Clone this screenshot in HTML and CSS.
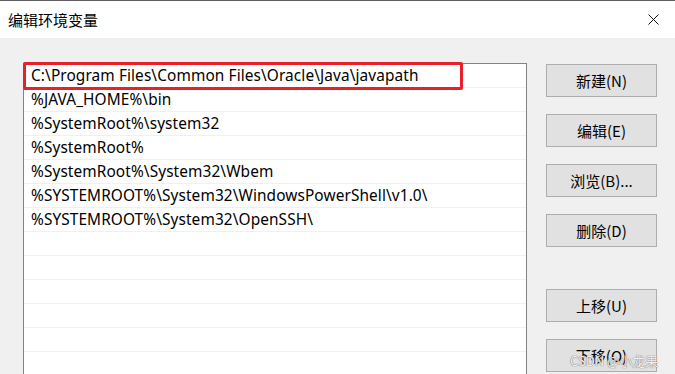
FILE: index.html
```html
<!DOCTYPE html>
<html lang="zh-CN">
<head>
    <meta charset="UTF-8">
    <meta name="viewport" content="width=device-width, initial-scale=1.0">
    <title>编辑环境变量</title>
    <link rel="stylesheet" href="styles.css">
</head>
<body>
    <div class="window">
        <!-- Title bar -->
        <div class="titlebar">
            <span class="title">编辑环境变量</span>
            <svg class="close" width="11" height="11" viewBox="0 0 11 11">
                <path d="M0.5 0.5 L10.5 10.5 M10.5 0.5 L0.5 10.5" stroke="#111" stroke-width="1" fill="none"/>
            </svg>
        </div>

        <div class="content">
            <div class="list">
                <div class="highlight"></div>
                <ul>
                    <li>C:\Program Files\Common Files\Oracle\Java\javapath</li>
                    <li>%JAVA_HOME%\bin</li>
                    <li>%SystemRoot%\system32</li>
                    <li>%SystemRoot%</li>
                    <li>%SystemRoot%\System32\Wbem</li>
                    <li>%SYSTEMROOT%\System32\WindowsPowerShell\v1.0\</li>
                    <li>%SYSTEMROOT%\System32\OpenSSH\</li>
                    <li></li>
                    <li></li>
                    <li></li>
                    <li></li>
                    <li></li>
                    <li></li>
                    <li></li>
                </ul>
            </div>

            <div class="buttons">
                <button>新建(N)</button>
                <button>编辑(E)</button>
                <button>浏览(B)...</button>
                <button>删除(D)</button>
                <button class="gap">上移(U)</button>
                <button>下移(O)</button>
            </div>
        </div>

        <div class="watermark">CSDN @小龙果</div>
    </div>
</body>
</html>
```

FILE: styles.css
```css
/* Windows dialog look */
body {
    margin: 0;
    padding: 0;
    font-family: 'Noto Sans', 'Noto Sans CJK SC', sans-serif;
    font-size: 15px;
    color: #000;
    overflow: hidden;
}

.window {
    width: 675px;
    height: 374px;
    border-top: 1px solid #5f5f5f;
    background: #f0f0f0;
    position: relative;
    overflow: hidden;
    box-sizing: border-box;
}

.titlebar {
    height: 37px;
    background: #fff;
    display: flex;
    align-items: center;
    justify-content: space-between;
    padding: 0 16px 0 8px;
}

.title {
    font-family: 'Noto Sans CJK SC', sans-serif;
    font-size: 15px;
    color: #000;
}

.close {
    display: block;
}

.content {
    display: flex;
    align-items: flex-start;
    gap: 19px;
    padding: 25px 0 0 23px;
}

/* Path list */
.list {
    width: 504px;
    height: 400px;
    border: 1px solid #838383;
    background: #fff;
    box-sizing: border-box;
    position: relative;
}

.list ul {
    list-style-type: none;
    margin: 0;
    padding: 0;
}

.list li {
    height: 23px;
    line-height: 24px;
    border-bottom: 1px solid #f0f0f0;
    padding-left: 7px;
    font-size: 15.4px;
    letter-spacing: 0.1px;
    white-space: nowrap;
}

.highlight {
    position: absolute;
    left: -1px;
    top: -2px;
    width: 440px;
    height: 28px;
    border: 3px solid #e8202a;
    border-radius: 2px;
    box-sizing: border-box;
}

/* Side buttons */
.buttons {
    display: flex;
    flex-direction: column;
    gap: 17px;
    padding-top: 1px;
}

button {
    width: 111px;
    height: 33px;
    background-color: #e1e1e1;
    border: 1px solid #adadad;
    font-family: 'Noto Sans CJK SC', sans-serif;
    font-size: 15px;
    color: #000;
    padding: 0;
    box-sizing: border-box;
}

button.gap {
    margin-top: 25px;
}

.watermark {
    position: absolute;
    left: 570px;
    top: 350px;
    font-family: 'Noto Sans CJK SC', sans-serif;
    font-size: 13px;
    color: rgba(255, 255, 255, 0.9);
    text-shadow: 0 0 1px #777, 0 0 1px #777;
}
```
